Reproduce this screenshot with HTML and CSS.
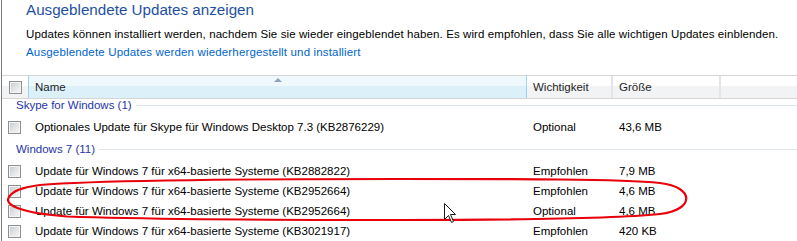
FILE: index.html
```html
<!DOCTYPE html>
<html lang="de">
<head>
  <meta charset="UTF-8" />
  <meta name="viewport" content="width=device-width, initial-scale=1.0"/>
  <title>Ausgeblendete Updates anzeigen</title>
  <link rel="stylesheet" href="styles.css">
</head>
<body>
  <div class="frame">
    <div class="intro">
      <h1 class="title">Ausgeblendete Updates anzeigen</h1>
      <p class="desc">Updates können installiert werden, nachdem Sie sie wieder eingeblendet haben. Es wird empfohlen, dass Sie alle wichtigen Updates einblenden.</p>
      <a class="link" href="#">Ausgeblendete Updates werden wiederhergestellt und installiert</a>
    </div>

    <div class="list">
      <div class="list-head">
        <div class="hcell hcheck"><span class="check"></span></div>
        <div class="hcell hname">Name<span class="sort-arrow"></span></div>
        <div class="hcell">Wichtigkeit</div>
        <div class="hcell">Größe</div>
        <div class="hcell hfill"></div>
      </div>

      <div class="group first"><span>Skype for Windows (1)</span></div>
      <div class="row">
        <div class="cell ccheck"><span class="check"></span></div>
        <div class="cell cname">Optionales Update für Skype für Windows Desktop 7.3 (KB2876229)</div>
        <div class="cell">Optional</div>
        <div class="cell">43,6 MB</div>
      </div>

      <div class="group"><span>Windows 7 (11)</span></div>
      <div class="row">
        <div class="cell ccheck"><span class="check"></span></div>
        <div class="cell cname">Update für Windows 7 für x64-basierte Systeme (KB2882822)</div>
        <div class="cell">Empfohlen</div>
        <div class="cell">7,9 MB</div>
      </div>
      <div class="row">
        <div class="cell ccheck"><span class="check"></span></div>
        <div class="cell cname">Update für Windows 7 für x64-basierte Systeme (KB2952664)</div>
        <div class="cell">Empfohlen</div>
        <div class="cell">4,6 MB</div>
      </div>
      <div class="row">
        <div class="cell ccheck"><span class="check"></span></div>
        <div class="cell cname">Update für Windows 7 für x64-basierte Systeme (KB2952664)</div>
        <div class="cell">Optional</div>
        <div class="cell">4,6 MB</div>
      </div>
      <div class="row">
        <div class="cell ccheck"><span class="check"></span></div>
        <div class="cell cname">Update für Windows 7 für x64-basierte Systeme (KB3021917)</div>
        <div class="cell">Empfohlen</div>
        <div class="cell">420 KB</div>
      </div>
    </div>
  </div>

  <!-- red marker drawn around the two duplicate rows -->
  <svg class="mark" width="797" height="241" viewBox="0 0 797 241">
    <path d="M400,179 C520,179 620,179 660,183 C695,187 695,210 660,214 C620,218 520,220 400,220 C250,220 110,218 67,216.5 C20,213 5,205 8.5,198 C12,190 25,187 40,185 C100,180 250,179 400,179 Z"
          fill="none" stroke="#e8000b" stroke-width="2.2"/>
  </svg>

  <svg class="pointer" width="14" height="22" viewBox="0 0 14 22">
    <path d="M0.5,0.5 L0.5,16.5 L4.5,12.5 L7.5,19.5 L9.5,18.5 L6.5,11.5 L11.5,11.5 Z"
          fill="#fff" stroke="#1b1b1b" stroke-width="1" stroke-linejoin="miter"/>
  </svg>
</body>
</html>
```

FILE: styles.css
```css
body {
  margin: 0;
  overflow: hidden;
  background: #fff;
  color: #000;
  font-family: "Liberation Sans", Arial, sans-serif;
  font-size: 11.5px;
  position: relative;
  height: 241px;
}

.frame {
  margin-left: 1px;
  border-left: 1px solid #7a7a7a;
  height: 241px;
}

.intro {
  padding-left: 24px;
}

.title {
  margin: 0;
  font-size: 15.2px;
  font-weight: normal;
  line-height: 20px;
  color: #1e50a2;
}

.desc {
  margin: 5px 0 0;
  line-height: 18px;
  letter-spacing: 0.1px;
}

.link {
  display: block;
  line-height: 18px;
  color: #0066cc;
  text-decoration: none;
  letter-spacing: 0.16px;
}

.list {
  margin-top: 14px;
}

.list-head,
.row {
  display: grid;
  grid-template-columns: 26px 499px 86px 108px 1fr;
}

.list-head {
  border-top: 1px solid #d5d5d5;
  border-bottom: 1px solid #d5d5d5;
  height: 22px;
  line-height: 22px;
}

.hcell {
  padding-left: 6px;
  color: #1e1e1e;
  background: linear-gradient(#ffffff 0, #ffffff 45%, #f2f3f5 45%, #f2f3f5 100%);
  border-right: 2px solid #e3e5e8;
}

.hcheck {
  padding-left: 7px;
  border-right: none;
  display: flex;
  align-items: center;
}

.hname {
  position: relative;
  border-left: 1px solid #9ed3f0;
  border-right: 1px solid #9ed3f0;
  background: linear-gradient(#eef8fd 0, #eef8fd 45%, #dbf0f9 45%, #dbf0f9 100%);
}

.hfill {
  border-right: none;
}

.sort-arrow {
  position: absolute;
  top: 2px;
  left: 50%;
  margin-left: -4px;
  width: 0;
  height: 0;
  border-left: 4px solid transparent;
  border-right: 4px solid transparent;
  border-bottom: 4px solid #8ea4bd;
}

.check {
  display: block;
  box-sizing: border-box;
  width: 13px;
  height: 13px;
  border: 1px solid #8e8f8f;
  background: linear-gradient(135deg, #c5c9ce 0%, #e4e6e8 55%, #f7f7f7 100%);
  box-shadow: inset 0 0 0 1px #f4f4f4;
}

.group {
  display: flex;
  align-items: center;
  gap: 4px;
  padding: 0 0 5px 14px;
  line-height: 13px;
  color: #1f35a8;
}

.group::after {
  content: "";
  flex: 1;
  height: 1px;
  background: #dfe5ec;
}

.group:not(.first) {
  margin-top: 6px;
}

.row {
  height: 20px;
  line-height: 20px;
}

.cell {
  padding-left: 6px;
  white-space: nowrap;
}

.ccheck {
  display: flex;
  align-items: center;
  padding-left: 6px;
}

.cname {
  padding-left: 7px;
}

.mark {
  position: absolute;
  left: 0;
  top: 0;
  pointer-events: none;
}

.pointer {
  position: absolute;
  left: 444px;
  top: 203px;
}
```
